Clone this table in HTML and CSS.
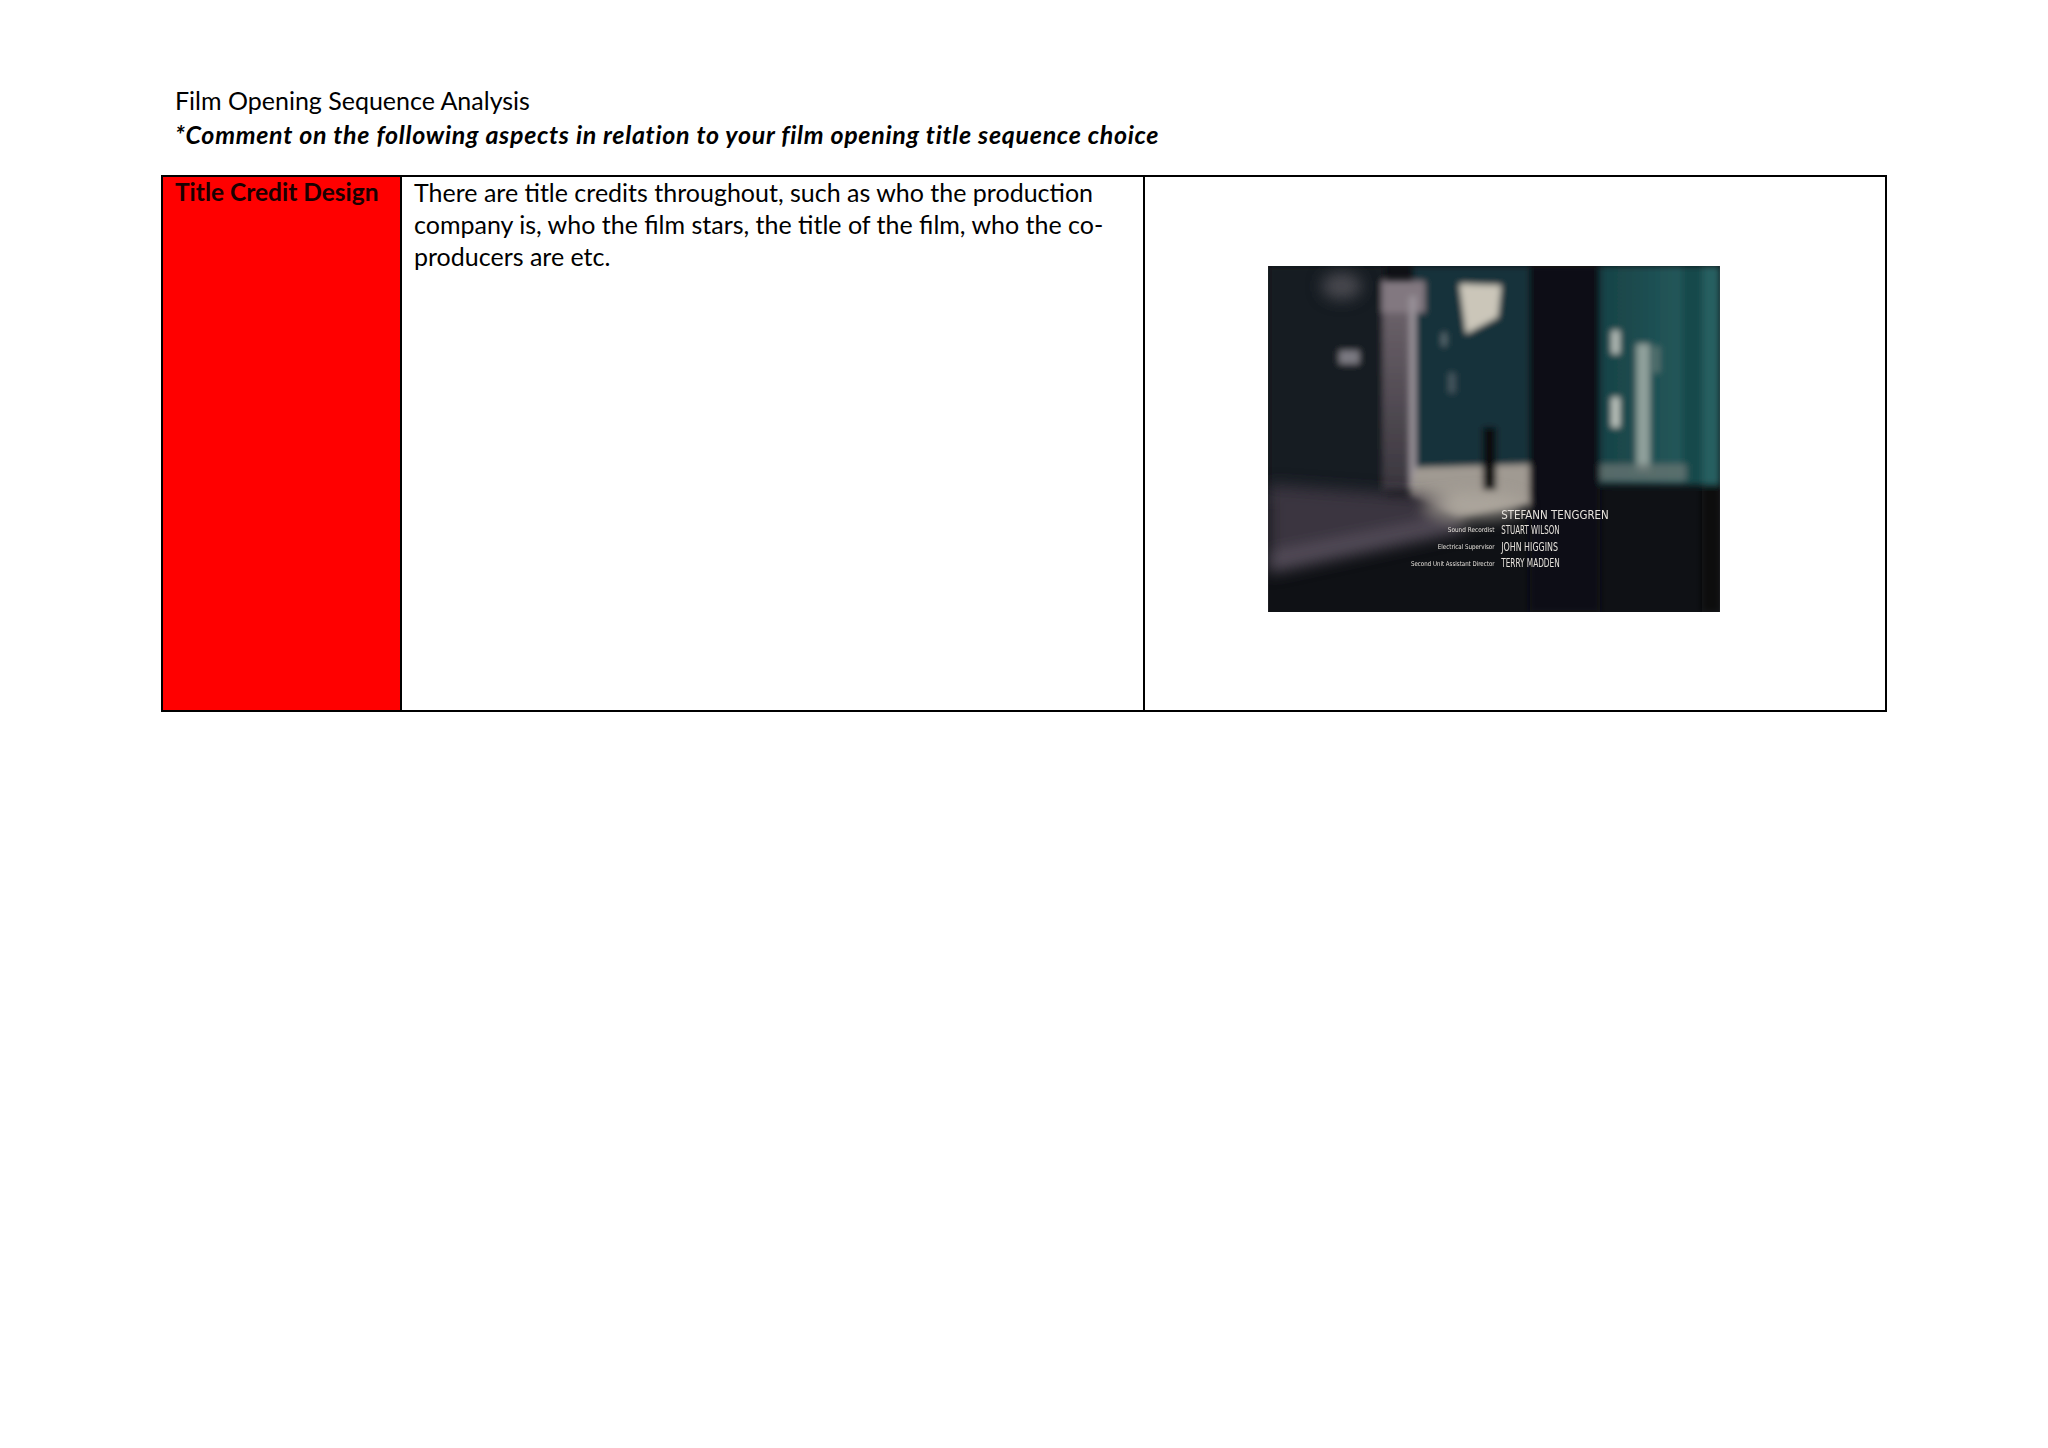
FILE: index.html
```html
<!DOCTYPE html>
<html lang="en">
<head>
<meta charset="utf-8">
<title>Film Opening Sequence Analysis</title>
<link rel="stylesheet" href="styles.css">
</head>
<body>
<div class="page">
  <div class="heading">
    <div class="heading-title">Film Opening Sequence Analysis</div>
    <div class="heading-sub">*Comment on the following aspects in relation to your film opening title sequence choice</div>
  </div>
  <table class="sheet">
    <colgroup>
      <col class="col-label">
      <col class="col-text">
      <col class="col-image">
    </colgroup>
    <tr>
      <td class="cell-label"><div class="cell-inner">Title Credit Design</div></td>
      <td class="cell-text"><div class="cell-inner">There are title credits throughout, such as who the production<br>company is, who the film stars, the title of the film, who the co-<br>producers are etc.</div></td>
      <td class="cell-image">
        <svg class="still" viewBox="0 0 1353 1036" width="452" height="346" xmlns="http://www.w3.org/2000/svg">
          <defs>
            <filter id="soft" x="-5%" y="-5%" width="110%" height="110%"><feGaussianBlur stdDeviation="10"/></filter>
            <filter id="softer" x="-20%" y="-20%" width="140%" height="140%"><feGaussianBlur stdDeviation="22"/></filter>
            <filter id="txt"><feGaussianBlur stdDeviation="1.2"/></filter>
            <linearGradient id="teal" x1="0" y1="0" x2="1" y2="0">
              <stop offset="0" stop-color="#174246"/>
              <stop offset="1" stop-color="#286163"/>
            </linearGradient>
            <linearGradient id="pill" x1="0" y1="0" x2="0" y2="1">
              <stop offset="0" stop-color="#726870"/>
              <stop offset="1" stop-color="#3a363e"/>
            </linearGradient>
          </defs>
          <rect width="1353" height="1036" fill="#0f1115"/>
          <g filter="url(#soft)">
            <rect x="0" y="0" width="350" height="720" fill="#161a21"/>
            <rect x="433" y="0" width="360" height="660" fill="#15303a"/>
            <rect x="993" y="0" width="360" height="655" fill="url(#teal)"/>
            <rect x="1240" y="0" width="60" height="655" fill="#19484b"/>
            <polygon points="573,53 698,58 688,153 593,203" fill="#cbc6b9"/>
            <rect x="520" y="200" width="14" height="40" fill="#5e7076"/>
            <rect x="540" y="320" width="20" height="60" fill="#465860"/>
            <rect x="343" y="43" width="100" height="630" fill="url(#pill)"/>
            <rect x="340" y="45" width="130" height="95" fill="#827880"/>
            <rect x="423" y="90" width="20" height="580" fill="#9a939a"/>
            <rect x="213" y="253" width="60" height="40" fill="#7c7a82"/>
            <rect x="1028" y="193" width="25" height="70" fill="#b2bab5"/>
            <rect x="1028" y="393" width="25" height="90" fill="#bcc2bc"/>
            <rect x="1103" y="233" width="40" height="380" fill="#90a09b"/>
            <rect x="1153" y="240" width="20" height="80" fill="#557270"/>
            <rect x="993" y="593" width="260" height="50" fill="#667472" opacity="0.8"/>
            <polygon points="443,603 783,593 793,713 563,753 423,693" fill="#a09a92"/>
            <rect x="643" y="483" width="40" height="190" fill="#0a0c0e"/>
            <rect x="783" y="0" width="210" height="1036" fill="#0c0f12"/>
            <rect x="1300" y="655" width="53" height="381" fill="#0c0e11"/>
          </g>
          <g filter="url(#softer)">
            <ellipse cx="220" cy="60" rx="60" ry="40" fill="#48484f"/>
            <polygon points="0,653 543,693 503,773 0,903" fill="#3a3440"/>
            <polygon points="0,860 560,750 600,790 0,920" fill="#544e5a"/>
            <ellipse cx="620" cy="720" rx="150" ry="40" fill="#b0aaa0" opacity="0.7"/>
          </g>
          <g filter="url(#txt)" fill="#e6e2dc" font-family="'DejaVu Sans Condensed', 'Liberation Sans', sans-serif">
            <text x="698" y="758" font-size="36" textLength="322" lengthAdjust="spacingAndGlyphs">STEFANN TENGGREN</text>
            <text x="698" y="802" font-size="36" textLength="175" lengthAdjust="spacingAndGlyphs">STUART WILSON</text>
            <text x="698" y="852" font-size="36" textLength="170" lengthAdjust="spacingAndGlyphs">JOHN HIGGINS</text>
            <text x="698" y="902" font-size="36" textLength="175" lengthAdjust="spacingAndGlyphs">TERRY MADDEN</text>
            <text x="538" y="798" font-size="20" textLength="140" lengthAdjust="spacingAndGlyphs">Sound Recordist</text>
            <text x="508" y="848" font-size="20" textLength="170" lengthAdjust="spacingAndGlyphs">Electrical Supervisor</text>
            <text x="428" y="898" font-size="20" textLength="250" lengthAdjust="spacingAndGlyphs">Second Unit Assistant Director</text>
          </g>
        </svg>
      </td>
    </tr>
  </table>
</div>
</body>
</html>
```
FILE: styles.css
```css
html, body {
  margin: 0;
  padding: 0;
  background: #ffffff;
}

body {
  font-family: "Lato", "Open Sans", sans-serif;
  color: #000000;
}

.page {
  padding: 83px 0 0 161px;
}

.heading {
  padding-left: 14px;
  font-size: 25px;
  line-height: 34px;
}

.heading-sub {
  font-weight: bold;
  font-style: italic;
  letter-spacing: 0.7px;
}

.sheet {
  margin-top: 24px;
  border-collapse: collapse;
  table-layout: fixed;
  width: 1724px;
  height: 537px;
  border: 2px solid #000000;
}

.col-label {
  width: 239px;
}

.col-text {
  width: 743px;
}

.col-image {
  width: 742px;
}

.sheet td {
  border: 2px solid #000000;
  vertical-align: top;
  padding: 0 12px;
  font-size: 25px;
  line-height: 32px;
}

.cell-inner {
  margin-top: -1px;
}

.cell-label {
  background: #ff0000;
  font-weight: bold;
  color: #1a0000;
  white-space: nowrap;
  font-size: 24.5px !important;
}

.cell-text {
  white-space: nowrap;
}

.cell-image {
  padding: 89px 0 0 123px !important;
}

.still {
  display: block;
}
```
